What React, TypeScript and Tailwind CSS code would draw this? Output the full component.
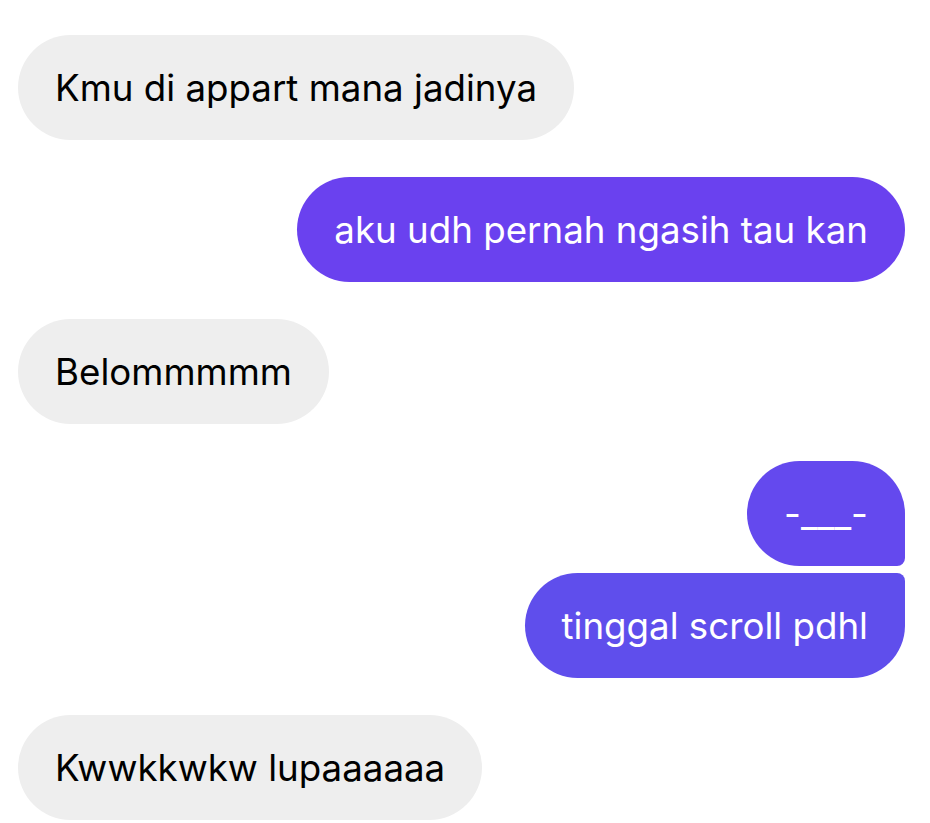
import { FC } from "react";

type Msg = {
  text: string;
  mine: boolean;
  className: string;
};

const messages: Msg[] = [
  { text: "Kmu di appart mana jadinya", mine: false, className: "mt-[35px] rounded-full" },
  { text: "aku udh pernah ngasih tau kan", mine: true, className: "mt-[37px] rounded-full bg-[#6a41ef]" },
  { text: "Belommmmm", mine: false, className: "mt-[37px] rounded-full" },
  {
    text: "-___-",
    mine: true,
    className: "mt-[37px] rounded-t-[53px] rounded-bl-[53px] rounded-br-[8px] bg-[#6449ee]",
  },
  {
    text: "tinggal scroll pdhl",
    mine: true,
    className: "mt-[7px] rounded-b-[53px] rounded-tl-[53px] rounded-tr-[8px] bg-[#5f4eec]",
  },
  { text: "Kwwkkwkw lupaaaaaa", mine: false, className: "mt-[37px] rounded-full" },
];

const App: FC = () => {
  return (
    <div className="flex min-h-[823px] w-[930px] flex-col bg-white pl-[18px] pr-[25px] font-['Inter',sans-serif]">
      {messages.map((m, i) => (
        <div key={i} className={m.mine ? "flex justify-end" : "flex justify-start"}>
          <div
            className={`flex h-[105px] items-center px-[37px] pt-[2px] text-[36.7px] leading-none ${
              m.mine ? "text-white" : "bg-[#eeeeee] text-black"
            } ${m.className}`}
          >
            {m.text}
          </div>
        </div>
      ))}
    </div>
  );
};

export default App;
